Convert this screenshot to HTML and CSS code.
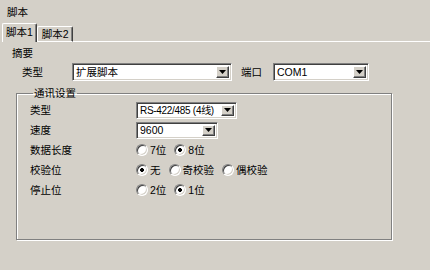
FILE: index.html
```html
<!DOCTYPE html>
<html>
<head>
<meta charset="utf-8">
<link rel="stylesheet" href="styles.css">
</head>
<body>
<div class="title">脚本</div>
<div class="tabs">
  <div class="tab active">脚本1</div>
  <div class="tab">脚本2</div>
  <div class="tab-fill"></div>
</div>
<div class="panel">
  <div class="section">摘要</div>
  <div class="row1">
    <span class="lbl1">类型</span>
    <div class="combo w160"><span class="ctext">扩展脚本</span><span class="cbtn"><svg width="7" height="4" viewBox="0 0 7 4"><polygon points="0,0 7,0 3.5,4" fill="#000"/></svg></span></div>
    <span class="lbl2">端口</span>
    <div class="combo w96"><span class="ctext">COM1</span><span class="cbtn"><svg width="7" height="4" viewBox="0 0 7 4"><polygon points="0,0 7,0 3.5,4" fill="#000"/></svg></span></div>
  </div>
  <fieldset class="group">
    <legend>通讯设置</legend>
    <div class="grid">
      <span class="glbl">类型</span>
      <div class="cell"><div class="combo w101"><span class="ctext narrow">RS-422/485 (4线)</span><span class="cbtn"><svg width="7" height="4" viewBox="0 0 7 4"><polygon points="0,0 7,0 3.5,4" fill="#000"/></svg></span></div></div>
      <span class="glbl">速度</span>
      <div class="cell"><div class="combo w82"><span class="ctext">9600</span><span class="cbtn"><svg width="7" height="4" viewBox="0 0 7 4"><polygon points="0,0 7,0 3.5,4" fill="#000"/></svg></span></div></div>
      <span class="glbl">数据长度</span>
      <div class="cell radios"><span class="opt"><span class="radio"></span>7位</span><span class="opt"><span class="radio on"></span>8位</span></div>
      <span class="glbl">校验位</span>
      <div class="cell radios"><span class="opt"><span class="radio on"></span>无</span><span class="opt"><span class="radio"></span>奇校验</span><span class="opt"><span class="radio"></span>偶校验</span></div>
      <span class="glbl">停止位</span>
      <div class="cell radios"><span class="opt"><span class="radio"></span>2位</span><span class="opt"><span class="radio on"></span>1位</span></div>
    </div>
  </fieldset>
</div>
</body>
</html>
```
FILE: styles.css
```css
html, body {
  margin: 0;
  padding: 0;
}
body {
  width: 430px;
  height: 270px;
  overflow: hidden;
  background: #d4d0c8;
  color: #000;
  font-family: "Liberation Sans", "Noto Sans CJK SC", sans-serif;
  font-size: 10.5px;
  line-height: 13px;
}
.title {
  box-sizing: border-box;
  height: 23px;
  padding: 6px 0 0 7px;
}
.tabs {
  display: flex;
  align-items: flex-end;
  height: 19px;
  padding-left: 2px;
}
.tab {
  box-sizing: border-box;
  height: 16px;
  line-height: 14px;
  padding: 0 3px 0 4px;
  border-top: 1px solid #fff;
  border-left: 1px solid #fff;
  border-right: 1px solid #404040;
  border-bottom: 1px solid #fff;
  border-radius: 2px 2px 0 0;
  box-shadow: inset -1px 0 0 #808080;
}
.tab.active {
  height: 19px;
  line-height: 17px;
  border-bottom: none;
  padding: 0 3px 0 3px;
}
.tab-fill {
  flex: 1;
  border-bottom: 1px solid #fff;
}
.panel {
  padding-left: 12px;
}
.section {
  margin-top: 5px;
}
.row1 {
  display: flex;
  align-items: center;
  margin-top: 3px;
  padding-left: 10px;
}
.lbl1 {
  width: 50px;
}
.lbl2 {
  width: 32px;
  margin-left: 9px;
}
.combo {
  box-sizing: border-box;
  height: 18px;
  display: flex;
  align-items: center;
  justify-content: space-between;
  background: #fff;
  border: 1px solid;
  border-color: #808080 #fff #fff #808080;
  box-shadow: inset 1px 1px 0 #404040, inset -1px -1px 0 #d4d0c8;
  padding: 2px;
}
.w160 { width: 160px; }
.w96 { width: 96px; }
.w101 { width: 101px; height: 17px; }
.w82 { width: 82px; height: 17px; }
.ctext {
  padding-left: 1px;
  white-space: nowrap;
}
.narrow {
  font-size: 10px;
  letter-spacing: -0.3px;
}
.cbtn {
  box-sizing: border-box;
  width: 13px;
  height: 100%;
  flex: none;
  display: flex;
  align-items: center;
  justify-content: center;
  background: #d4d0c8;
  border: 1px solid;
  border-color: #fff #404040 #404040 #fff;
  box-shadow: inset -1px -1px 0 #808080;
}
.group {
  box-sizing: border-box;
  width: 376px;
  margin: 6px 0 0 4px;
  padding: 0 0 39px 13px;
  border: 1px solid #808080;
  box-shadow: 1px 1px 0 #fff, inset 1px 1px 0 #fff;
  min-width: 0;
}
.group legend {
  padding: 0 1px;
  margin-left: 3px;
  line-height: 13px;
}
.grid {
  display: grid;
  grid-template-columns: 106px auto;
  grid-auto-rows: 20px;
  align-items: center;
}
.cell {
  display: flex;
  align-items: center;
}
.radios {
  gap: 8px;
}
.opt {
  display: inline-flex;
  align-items: center;
}
.radio {
  box-sizing: border-box;
  width: 12px;
  height: 12px;
  margin-right: 2px;
  border-radius: 50%;
  background: #fff;
  border: 1px solid;
  border-color: #808080 #fff #fff #808080;
  box-shadow: inset 1px 1px 0 #404040, inset -1px -1px 0 #d4d0c8;
}
.radio.on {
  background: radial-gradient(circle, #000 0 1.6px, #fff 2.2px);
}
```
